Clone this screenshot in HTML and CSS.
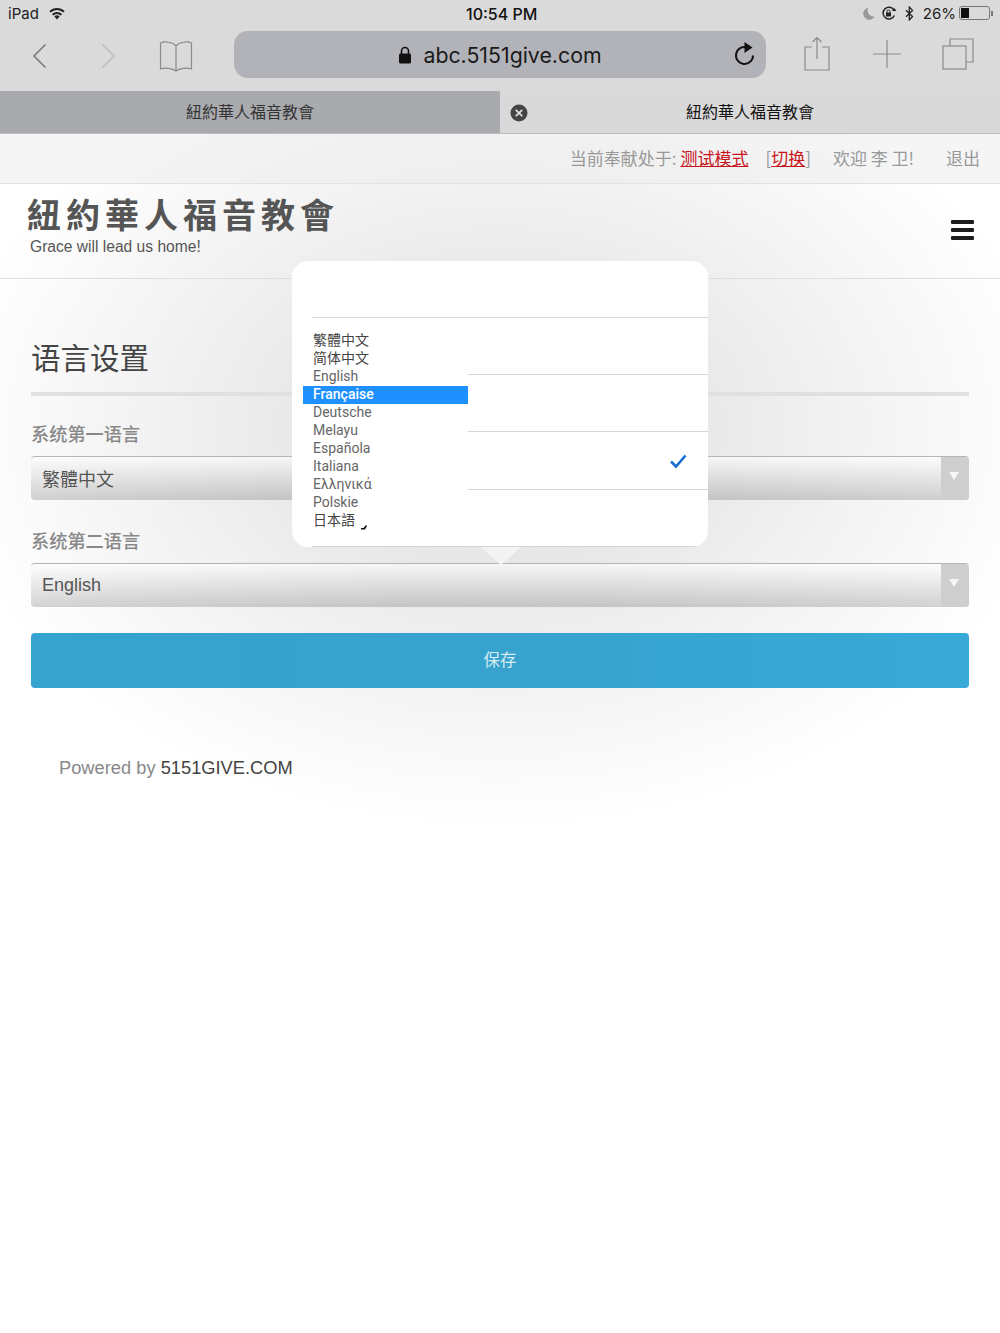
FILE: index.html
```html
<!DOCTYPE html>
<html lang="zh-CN">
<head>
    <meta charset="UTF-8">
    <meta name="viewport" content="width=device-width, initial-scale=1.0">
    <title>語言設置</title>
    <link rel="stylesheet" href="styles.css">
</head>
<body>
    <div class="browser">
        <div class="status-bar">
            <div class="status-left">
                <span>iPad</span>
                <svg class="wifi" width="18" height="13" viewBox="0 0 18 13"><path d="M9 12.500 6.400 9.600a3.700 3.700 0 0 1 5.200 0z" fill="#222"/><path d="M4.600 7.700a6.300 6.300 0 0 1 8.800 0M2 4.900a10 10 0 0 1 14 0" fill="none" stroke="#222" stroke-width="2"/></svg>
            </div>
            <div class="status-time">10:54 PM</div>
            <div class="status-right">
                <svg class="moon" width="12" height="13" viewBox="0 0 12 13"><path d="M5 .8a6 6 0 1 0 6.600 8.600A6.400 6.400 0 0 1 5 .8z" fill="#999"/></svg>
                <svg width="16" height="15" viewBox="0 0 16 15"><path d="M13.400 9.500A5.900 5.900 0 1 1 13 4" fill="none" stroke="#222" stroke-width="1.500"/><path d="M11 5h4.500l-2.200-3z" fill="#222"/><rect x="5" y="6.500" width="5" height="4" rx=".6" fill="#222"/><path d="M6 7V5.400a1.500 1.500 0 0 1 3 0V7" fill="none" stroke="#222"/></svg>
                <svg width="9" height="15" viewBox="0 0 9 15"><path d="M1 4.200 7.500 10.500 4.300 14V1l3.200 3.400L1 10.800" fill="none" stroke="#222" stroke-width="1.300"/></svg>
                <span class="battery-pct">26%</span>
                <span class="battery"><span class="battery-fill"></span></span>
                <span class="battery-nub"></span>
            </div>
        </div>
        <div class="toolbar">
            <div class="tool-cell back">
                <svg width="15" height="26" viewBox="0 0 15 26"><path d="M13.500 1.500 2 13l11.500 11.500" fill="none" stroke="#777" stroke-width="1.500"/></svg>
            </div>
            <div class="tool-cell forward">
                <svg width="15" height="26" viewBox="0 0 15 26"><path d="M1.500 1.500 13 13 1.500 24.500" fill="none" stroke="#bbb" stroke-width="1.500"/></svg>
            </div>
            <div class="tool-cell book">
                <svg width="34" height="32" viewBox="0 0 34 32"><path d="M17 6C14 2 6 1 1.500 3v26c5-1.500 12-1 15.500 2 3.500-3 10.500-3.500 15.500-2V3C28 1 20 2 17 6zm0 0v25" fill="none" stroke="#8a8a8a" stroke-width="1.200"/></svg>
            </div>
            <div class="url-bar">
                <div class="url-text">
                    <svg width="14" height="18" viewBox="0 0 14 18"><path d="M3.500 8V5a3.500 3.500 0 0 1 7 0v3" fill="none" stroke="#111" stroke-width="1.600"/><rect x="1" y="7.500" width="12" height="10" rx="1.500" fill="#111"/></svg>
                    <span>abc.5151give.com</span>
                </div>
                <svg class="reload" width="22" height="26" viewBox="0 0 22 26"><path d="M14.500 6.500a8.500 8.500 0 1 0 5.500 8" fill="none" stroke="#111" stroke-width="2"/><path d="M11.500 1v11l8-5.500z" fill="#111"/></svg>
            </div>
            <div class="tool-cell share">
                <svg width="26" height="35" viewBox="0 0 26 35"><path d="M8 11H1v23h24V11h-7M13 23V1.500M8.500 6 13 1.500 17.500 6" fill="none" stroke="#8a8a8a" stroke-width="1.200"/></svg>
            </div>
            <div class="tool-cell plus">
                <svg width="28" height="28" viewBox="0 0 28 28"><path d="M14 0v28M0 14h28" stroke="#8a8a8a" stroke-width="1.200"/></svg>
            </div>
            <div class="tool-cell tabs-btn">
                <svg width="32" height="32" viewBox="0 0 32 32"><rect x="1" y="8" width="23" height="23" fill="none" stroke="#8a8a8a" stroke-width="1.200"/><path d="M8 8V1h23v23h-7" fill="none" stroke="#8a8a8a" stroke-width="1.200"/></svg>
            </div>
        </div>
        <div class="tab-strip">
            <div class="tab tab-off">紐約華人福音教會</div>
            <div class="tab tab-on">
                <svg class="tab-close" width="18" height="18" viewBox="0 0 18 18"><circle cx="9" cy="9" r="8.500" fill="#444"/><path d="M5.800 5.800l6.400 6.400M12.200 5.800l-6.400 6.400" stroke="#ddd" stroke-width="1.800"/></svg>
                紐約華人福音教會
            </div>
        </div>
    </div>

    <div class="page">
        <div class="top-links">
            <span>当前奉献处于: <a href="#">测试模式</a></span>
            <span class="switch">[<a href="#">切换</a>]</span>
            <span class="welcome">欢迎 李 卫!</span>
            <span class="logout">退出</span>
        </div>

        <header class="site-header">
            <div>
                <div class="site-title">紐約華人福音教會</div>
                <div class="site-tagline">Grace will lead us home!</div>
            </div>
            <div class="hamburger"><span></span><span></span><span></span></div>
        </header>

        <main class="content">
            <h2>语言设置</h2>
            <div class="field">
                <label>系统第一语言</label>
                <div class="select-box"><span class="select-cjk">繁體中文</span><span class="select-arrow"></span></div>
            </div>
            <div class="field">
                <label>系统第二语言</label>
                <div class="select-box"><span>English</span><span class="select-arrow"></span></div>
            </div>
            <button class="save-btn">保存</button>
            <p class="powered">Powered by <span>5151GIVE.COM</span></p>
        </main>

        <div class="popover">
            <div class="pop-row"></div>
            <div class="pop-row"></div>
            <div class="pop-row"></div>
            <div class="pop-row pop-row-checked">
                <svg width="18" height="16" viewBox="0 0 18 16"><path d="M2 8.500 7 13.500 16.500 2.500" fill="none" stroke="#1a6dd0" stroke-width="2.600"/></svg>
            </div>
            <div class="pop-row"></div>
            <ul class="lang-list">
                <li class="cjk">繁體中文</li>
                <li class="cjk">简体中文</li>
                <li>English</li>
                <li class="active">Française</li>
                <li>Deutsche</li>
                <li>Melayu</li>
                <li>Española</li>
                <li>Italiana</li>
                <li>Ελληνικά</li>
                <li>Polskie</li>
                <li class="cjk">日本語<svg class="list-mark" width="6" height="5" viewBox="0 0 6 5"><path d="M0 3h2.500L5 0l1 1-2 3.500H0z" fill="#111"/></svg></li>
            </ul>
        </div>
        <div class="popover-arrow"></div>
    </div>
</body>
</html>
```

FILE: styles.css
```css
* {
    margin: 0;
    padding: 0;
    box-sizing: border-box;
}

body {
    font-family: 'Liberation Sans', 'Noto Sans CJK SC', sans-serif;
    background: #fff;
    color: #444;
    min-height: 1333px;
}

/* safari chrome */
.browser {
    background: #dadada;
    color: #111;
}

.status-bar {
    height: 31px;
    display: flex;
    align-items: center;
    justify-content: space-between;
    padding: 0 7px 5px 8px;
    font-family: 'Inter', sans-serif;
    font-size: 15px;
    position: relative;
}

.status-left {
    display: flex;
    align-items: center;
    gap: 9px;
    color: #222;
}

.status-time {
    position: absolute;
    left: 466px;
    top: 4px;
    font-weight: 500;
    font-size: 16px;
}

.status-right {
    display: flex;
    align-items: center;
    gap: 8px;
    color: #222;
}

.moon {
    margin-right: -2px;
}

.battery-pct {
    margin-left: 1px;
    margin-right: -5px;
}

.battery {
    width: 31px;
    height: 14px;
    border: 1px solid #777;
    border-radius: 3px;
    padding: 1px;
    display: flex;
}

.battery-fill {
    width: 8px;
    background: #111;
}

.battery-nub {
    width: 2px;
    height: 5px;
    background: #777;
    margin-left: -7px;
}

.toolbar {
    height: 60px;
    display: flex;
    align-items: flex-start;
}

.tool-cell {
    display: flex;
    justify-content: center;
}

.back {
    width: 78px;
    padding-top: 12px;
}

.forward {
    width: 60px;
    padding-top: 12px;
}

.book {
    width: 76px;
    padding-top: 9px;
}

.url-bar {
    width: 532px;
    height: 47px;
    margin-left: 20px;
    background: #b2b3b8;
    border-radius: 14px;
    position: relative;
    display: flex;
    align-items: center;
    justify-content: center;
}

.url-text {
    display: flex;
    align-items: center;
    gap: 11px;
    font-family: 'Inter', sans-serif;
    font-size: 21.300px;
    color: #1a1a1a;
}

.reload {
    position: absolute;
    right: 11px;
    top: 10px;
}

.share {
    width: 102px;
    padding-top: 5px;
}

.plus {
    width: 38px;
    padding-top: 9px;
}

.tabs-btn {
    width: 94px;
    justify-content: flex-end;
    padding: 7px 26px 0 0;
}

.tab-strip {
    display: flex;
    height: 43px;
    border-bottom: 1px solid #bdbdbd;
}

.tab {
    width: 500px;
    display: flex;
    align-items: center;
    justify-content: center;
    padding-bottom: 2px;
    font-size: 16px;
    font-family: 'Noto Sans CJK TC', sans-serif;
    position: relative;
}

.tab-off {
    background: #a9aaae;
    color: #333;
}

.tab-on {
    background: #d9d9d9;
    color: #111;
}

.tab-close {
    position: absolute;
    left: 10px;
    top: 13px;
}

/* page */
.page {
    position: relative;
    height: 1199px;
    background: radial-gradient(ellipse 560px 400px at 500px 295px, #dcdcdc 0%, #e8e8e8 35%, #f3f3f3 65%, #fff 100%);
}

.top-links {
    height: 50px;
    display: flex;
    justify-content: flex-end;
    align-items: center;
    padding: 0 20px 2px 0;
    font-family: 'Noto Sans CJK SC', sans-serif;
    font-size: 17px;
    color: #999;
    background: rgba(235, 235, 235, 0.5);
    border-bottom: 1px solid #e2e2e2;
}

.top-links a {
    color: #c8151b;
}

.switch {
    margin-left: 17px;
}

.welcome {
    margin-left: 22px;
}

.logout {
    margin-left: 32px;
}

.site-header {
    height: 95px;
    display: flex;
    justify-content: space-between;
    align-items: flex-start;
    padding: 8px 26px 0 27px;
    border-bottom: 1px solid #dedede;
}

.site-title {
    font-family: 'Noto Sans CJK TC', sans-serif;
    font-size: 34px;
    font-weight: 600;
    letter-spacing: 5px;
    line-height: 44px;
    color: #555;
}

.site-tagline {
    font-size: 15.600px;
    line-height: 20px;
    margin-left: 3px;
    margin-top: 1px;
    color: #555;
}

.hamburger {
    margin-top: 28px;
    width: 23px;
    display: flex;
    flex-direction: column;
    gap: 4px;
}

.hamburger span {
    height: 4px;
    border-radius: 1px;
    background: #1c1c1c;
}

.content {
    padding: 57px 31px 0;
}

h2 {
    font-family: 'Noto Sans CJK SC', sans-serif;
    font-size: 29.500px;
    font-weight: 400;
    line-height: 40px;
    padding-bottom: 16px;
    margin-bottom: 24px;
    border-bottom: 4px solid #e0e0e0;
    color: #444;
}

.field {
    padding-top: 1px;
    margin-bottom: 26px;
}

.field:first-of-type {
    margin-bottom: 27px;
}

label {
    display: block;
    font-family: 'Noto Sans CJK SC', sans-serif;
    font-size: 18.200px;
    font-weight: 500;
    line-height: 24px;
    margin-bottom: 11px;
    color: #888;
}

.select-box {
    height: 44px;
    display: flex;
    justify-content: space-between;
    align-items: center;
    padding-left: 11px;
    border-radius: 4px;
    border-top: 1px solid #b5b5b5;
    background: linear-gradient(rgba(255, 255, 255, 0.6), rgba(0, 0, 0, 0.17));
    font-family: 'Liberation Sans', 'Noto Sans CJK TC', sans-serif;
    font-size: 18px;
    color: #555;
}

.select-cjk {
    padding-bottom: 2px;
}

.select-arrow {
    width: 28px;
    height: 43px;
    background: #cecece;
    border-radius: 0 4px 4px 0;
    position: relative;
}

.select-arrow::after {
    content: '';
    position: absolute;
    left: 8px;
    top: 15px;
    border-left: 5px solid transparent;
    border-right: 5px solid transparent;
    border-top: 8px solid #f6f6f6;
}

.save-btn {
    display: block;
    width: 100%;
    height: 55px;
    padding-bottom: 3px;
    border: none;
    border-radius: 4px;
    background: linear-gradient(90deg, #35a3cf, #36a2cd 50%, #38aad9);
    color: #d5ecf5;
    font-family: 'Noto Sans CJK SC', sans-serif;
    font-size: 16.500px;
}

.powered {
    margin: 68px 0 0 28px;
    font-size: 18.300px;
    line-height: 24px;
    color: #888;
}

.powered span {
    color: #444;
}

/* language picker popover */
.popover {
    position: absolute;
    left: 292px;
    top: 127px;
    width: 416px;
    height: 286px;
    background: #fff;
    border-radius: 16px;
    overflow: hidden;
}

.pop-row {
    height: 57px;
    margin-left: 20px;
    border-bottom: 1px solid #d5d5d5;
    display: flex;
    align-items: center;
    justify-content: flex-end;
    padding-right: 21px;
}

.pop-row-checked {
    height: 58px;
}

.lang-list {
    position: absolute;
    left: 11px;
    top: 71px;
    width: 165px;
    list-style: none;
    background: #fff;
    font-family: 'Roboto', sans-serif;
    font-size: 14px;
    color: #666;
}

.lang-list li {
    height: 18px;
    line-height: 16px;
    padding-left: 10px;
}

.lang-list .cjk {
    font-family: 'Noto Sans CJK TC', sans-serif;
    font-size: 14px;
    line-height: 14px;
    color: #444;
}

.lang-list .active {
    background: #1e90ff;
    color: #fff;
    font-weight: 500;
}

.list-mark {
    margin-left: 6px;
    vertical-align: -5px;
}

.popover-arrow {
    position: absolute;
    left: 481px;
    top: 413px;
    border-left: 20px solid transparent;
    border-right: 20px solid transparent;
    border-top: 18px solid #f3f3f3;
}
```
